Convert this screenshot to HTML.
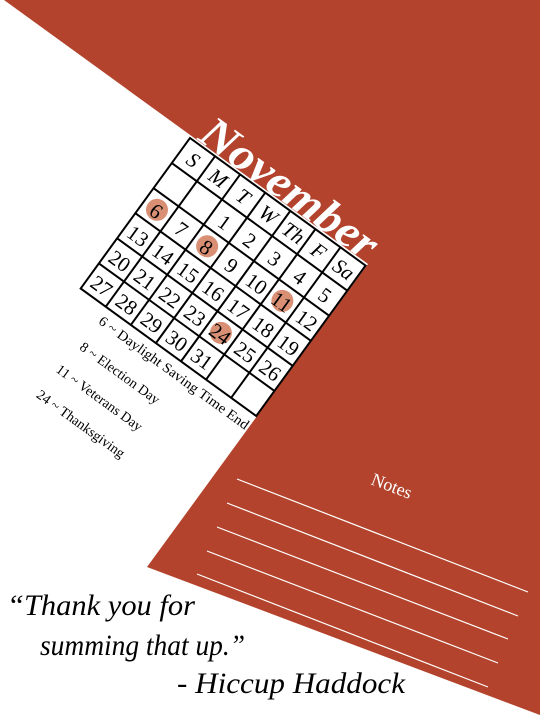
<!DOCTYPE html>
<html><head><meta charset="utf-8"><style>
html,body{margin:0;padding:0;background:#fff;}
svg{display:block;}
svg text{font-family:"Liberation Serif","DejaVu Serif","Noto Serif CJK SC",serif;}
</style></head><body>
<svg width="540" height="720" viewBox="0 0 540 720" xmlns="http://www.w3.org/2000/svg">
<rect width="540" height="720" fill="#fff"/>
<polygon points="4,0 540,0 540,715 147,567 368,264" fill="#b3432c"/>
<g stroke="#fff" stroke-width="1.2">
<line x1="237" y1="479" x2="528" y2="592"/>
<line x1="227" y1="503" x2="518" y2="616"/>
<line x1="217" y1="527" x2="508" y2="639"/>
<line x1="207" y1="551" x2="498" y2="663"/>
<line x1="197" y1="574" x2="488" y2="687"/>
</g>
<text x="0" y="0" transform="translate(370,484) rotate(21)" fill="#fff" font-size="18">Notes</text>

<g transform="translate(190,138) rotate(36)">
<rect x="0" y="0" width="217" height="186" fill="#fff"/>
<g fill="#d98f74">
<circle cx="15.5" cy="77.5" r="11"/>
<circle cx="77.5" cy="77.5" r="11"/>
<circle cx="170.5" cy="77.5" r="11"/>
<circle cx="139.5" cy="139.5" r="11"/>
</g>
<g stroke="#000" stroke-width="2" fill="none">
<rect x="0" y="0" width="217" height="186"/>
<line x1="31" y1="0" x2="31" y2="186"/><line x1="62" y1="0" x2="62" y2="186"/>
<line x1="93" y1="0" x2="93" y2="186"/><line x1="124" y1="0" x2="124" y2="186"/>
<line x1="155" y1="0" x2="155" y2="186"/><line x1="186" y1="0" x2="186" y2="186"/>
<line x1="0" y1="31" x2="217" y2="31"/><line x1="0" y1="62" x2="217" y2="62"/>
<line x1="0" y1="93" x2="217" y2="93"/><line x1="0" y1="124" x2="217" y2="124"/>
<line x1="0" y1="155" x2="217" y2="155"/>
</g>
<g font-size="21" font-style="italic" text-anchor="middle" fill="#000">
<text x="15.5" y="23">S</text><text x="46.5" y="23">M</text><text x="77.5" y="23">T</text>
<text x="108.5" y="23">W</text><text x="139.5" y="23">Th</text><text x="170.5" y="23">F</text><text x="201.5" y="23">Sa</text>
</g>
<g font-size="21" text-anchor="middle" fill="#000">
<text x="77.5" y="55">1</text><text x="108.5" y="55">2</text><text x="139.5" y="55">3</text><text x="170.5" y="55">4</text><text x="201.5" y="55">5</text>
<text x="15.5" y="86">6</text><text x="46.5" y="86">7</text><text x="77.5" y="86">8</text><text x="108.5" y="86">9</text><text x="139.5" y="86">10</text><text x="170.5" y="86">11</text><text x="201.5" y="86">12</text>
<text x="15.5" y="117">13</text><text x="46.5" y="117">14</text><text x="77.5" y="117">15</text><text x="108.5" y="117">16</text><text x="139.5" y="117">17</text><text x="170.5" y="117">18</text><text x="201.5" y="117">19</text>
<text x="15.5" y="148">20</text><text x="46.5" y="148">21</text><text x="77.5" y="148">22</text><text x="108.5" y="148">23</text><text x="139.5" y="148">24</text><text x="170.5" y="148">25</text><text x="201.5" y="148">26</text>
<text x="15.5" y="179">27</text><text x="46.5" y="179">28</text><text x="77.5" y="179">29</text><text x="108.5" y="179">30</text><text x="139.5" y="179">31</text>
</g>
<text x="6" y="-3" font-size="46" font-style="italic" font-weight="bold" fill="#fff" textLength="208" lengthAdjust="spacingAndGlyphs">November</text>
<g font-size="14" fill="#000">
<text x="34" y="204" textLength="182" lengthAdjust="spacingAndGlyphs">6 ~ Daylight Saving Time End</text>
<text x="34" y="236">8 ~ Election Day</text>
<text x="28" y="268">11 ~ Veterans Day</text>
<text x="27" y="300">24 ~ Thanksgiving</text>
</g>
</g>

<g font-size="30" font-style="italic" fill="#000">
<text x="7" y="615" textLength="188" lengthAdjust="spacingAndGlyphs">“Thank you for</text>
<text x="40" y="655" textLength="205" lengthAdjust="spacingAndGlyphs">summing that up.”</text>
<text x="177" y="693" textLength="228" lengthAdjust="spacingAndGlyphs">- Hiccup Haddock</text>
</g>
</svg>
</body></html>
